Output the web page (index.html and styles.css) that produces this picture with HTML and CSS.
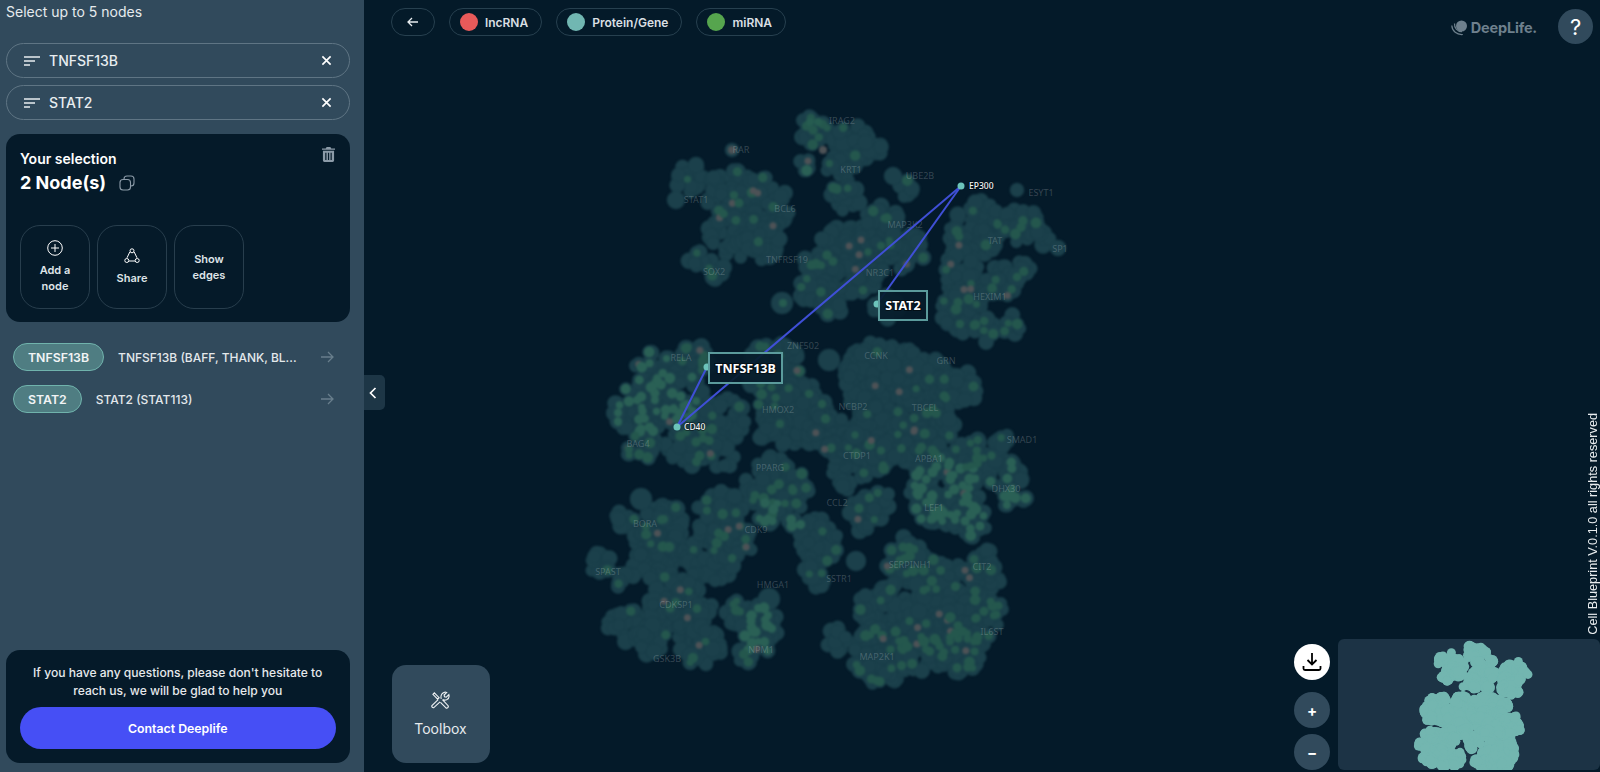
FILE: index.html
```html
<!DOCTYPE html>
<html lang="en">
<head>
  <meta charset="UTF-8" />
  <meta name="viewport" content="width=device-width, initial-scale=1.0" />
  <title>Cell Blueprint</title>
  <link rel="stylesheet" href="styles.css">
</head>
<body>
  <div class="app">
    <aside class="sidebar">
      <p class="hint">Select up to 5 nodes</p>

      <div class="search-pill">
        <svg class="sort-icon" viewBox="0 0 16 10"><path d="M0 1h16M0 5h11M0 9h6"/></svg>
        <span>TNFSF13B</span>
        <svg class="close-icon" viewBox="0 0 12 12"><path d="M1.5 1.5l9 9M10.5 1.5l-9 9"/></svg>
      </div>
      <div class="search-pill">
        <svg class="sort-icon" viewBox="0 0 16 10"><path d="M0 1h16M0 5h11M0 9h6"/></svg>
        <span>STAT2</span>
        <svg class="close-icon" viewBox="0 0 12 12"><path d="M1.5 1.5l9 9M10.5 1.5l-9 9"/></svg>
      </div>

      <section class="selection">
        <svg class="trash-icon" viewBox="0 0 14 16"><path d="M5 0h4l1 1.500h4v1.500H0V1.500h4zM1 4h12v10.500a1.500 1.500 0 0 1-1.500 1.500h-9A1.500 1.500 0 0 1 1 14.500zm2.500 2v8h1.300V6zm2.900 0v8h1.300V6zm2.800 0v8h1.300V6z"/></svg>
        <h3>Your selection</h3>
        <div class="count">
          <span>2 Node(s)</span>
          <svg class="copy-icon" viewBox="0 0 16 16"><rect x="1" y="4.500" width="10.500" height="10.500" rx="3"/><path d="M5 4.500V4a3 3 0 0 1 3-3h4a3 3 0 0 1 3 3v4a3 3 0 0 1-3 3h-.5"/></svg>
        </div>
        <div class="actions">
          <button class="action">
            <svg viewBox="0 0 16 16"><circle cx="8" cy="8" r="7.300"/><path d="M8 4v8M4 8h8"/></svg>
            Add a node
          </button>
          <button class="action">
            <svg viewBox="0 0 16 16"><path d="M5.800 4L3 9.800M10.200 4L13 9.800M5 13h6"/><circle cx="8" cy="2.800" r="2"/><circle cx="2.800" cy="12.500" r="2"/><circle cx="13.200" cy="12.500" r="2"/></svg>
            Share
          </button>
          <button class="action">Show edges</button>
        </div>
      </section>

      <div class="node-row">
        <span class="node-tag">TNFSF13B</span>
        <span class="node-name">TNFSF13B (BAFF, THANK, BL...</span>
        <svg class="go-icon" viewBox="0 0 14 12"><path d="M1 6h12M8 1l5 5-5 5"/></svg>
      </div>
      <div class="node-row">
        <span class="node-tag">STAT2</span>
        <span class="node-name">STAT2 (STAT113)</span>
        <svg class="go-icon" viewBox="0 0 14 12"><path d="M1 6h12M8 1l5 5-5 5"/></svg>
      </div>

      <section class="contact">
        <p>If you have any questions, please don't hesitate to reach us, we will be glad to help you</p>
        <button class="contact-btn">Contact Deeplife</button>
      </section>
    </aside>

    <main class="stage">
      <svg id="graph" class="graph" viewBox="364 0 1236 772"></svg>

      <header class="topbar">
        <div class="legend">
          <button class="chip back-chip">
            <svg viewBox="0 0 12 10"><path d="M11 5H1.500M5 1L1 5l4 4"/></svg>
          </button>
          <span class="chip"><i class="dot dot-red"></i>lncRNA</span>
          <span class="chip"><i class="dot dot-teal"></i>Protein/Gene</span>
          <span class="chip"><i class="dot dot-green"></i>miRNA</span>
        </div>
        <div class="brand">
          <div class="logo">
            <svg viewBox="0 0 18 16"><circle cx="10.500" cy="6" r="5.500"/><path class="logo-arc" d="M.8 5.500c.3 5.500 5 9.500 11 9M3.500 3.500c-.3 4 2.500 8 7.500 8.200"/></svg>
            <span>DeepLife.</span>
          </div>
          <button class="help">?</button>
        </div>
      </header>

      <button class="collapse">
        <svg viewBox="0 0 8 12"><path d="M6.500 1L1.500 6l5 5"/></svg>
      </button>

      <button class="toolbox">
        <svg viewBox="0 0 20 20"><path d="M2 3.500L3.500 2l5 5-1.500 1.500zM9.500 11.500l-6.500 6a1.600 1.600 0 0 1-2-2.200L7.500 9M12 9l6 6.500a1.700 1.700 0 0 1-2.300 2.300L10 12M10.800 8.200C10 5.500 11 2.500 13.500 1.500c1-.4 2-.4 3 0L13.800 4.200l.4 1.900 1.900.4 2.700-2.700c.6 2.200-.3 4.500-2.400 5.400-1.300.5-2.800.4-3.800-.3"/></svg>
        Toolbox
      </button>

      <p class="copyright">Cell Blueprint V.0.1.0 all rights reserved</p>

      <div class="map-area">
        <div class="map-controls">
          <button class="round-btn download">
            <svg viewBox="0 0 20 20"><path d="M10 1v11M5.500 8l4.500 4.500L14.500 8M1.500 14v2.500a1.500 1.500 0 0 0 1.500 1.500h14a1.500 1.500 0 0 0 1.500-1.500V14"/></svg>
          </button>
          <button class="round-btn zoom-in">+</button>
          <button class="round-btn">&minus;</button>
        </div>
        <svg id="minimap" class="minimap" viewBox="1338 639 262 131"></svg>
      </div>
    </main>
  </div>

  <script src="graph.js"></script>
</body>
</html>
```

FILE: styles.css
```css
* {
  box-sizing: border-box;
}

html, body {
  margin: 0;
  height: 100%;
  overflow: hidden;
}

body {
  font-family: Inter, "Noto Sans", sans-serif;
  background-color: #041a29;
  color: #fff;
}

button {
  font-family: inherit;
  color: inherit;
  border: none;
  background: none;
  padding: 0;
}

.app {
  display: flex;
  height: 772px;
}

/* sidebar */
.sidebar {
  width: 364px;
  flex-shrink: 0;
  display: flex;
  flex-direction: column;
  padding: 0 14.500px 9px 6px;
  background-color: #314a5c;
}

.hint {
  margin: 0 0 19px;
  font-size: 14px;
  line-height: 24px;
  color: #e6ebee;
}

.search-pill {
  display: flex;
  align-items: center;
  height: 35px;
  margin-bottom: 7px;
  padding: 0 17px;
  border: 1px solid #5f7584;
  border-radius: 18px;
  font-size: 14px;
  font-weight: 500;
  color: #e8edf0;
}

.search-pill span {
  flex: 1;
  margin-left: 9px;
}

.sort-icon {
  width: 16px;
  height: 10px;
  fill: none;
  stroke: #e8edf0;
  stroke-width: 1.300;
}

.close-icon {
  width: 11px;
  height: 11px;
  fill: none;
  stroke: #fff;
  stroke-width: 1.800;
}

.selection {
  position: relative;
  height: 188px;
  margin-top: 7px;
  margin-bottom: 21px;
  padding: 16px 14px;
  border-radius: 14px;
  background-color: #051a29;
}

.selection h3 {
  margin: 0;
  font-size: 14px;
  line-height: 17px;
  font-weight: 600;
}

.trash-icon {
  position: absolute;
  top: 13px;
  right: 15px;
  width: 13px;
  height: 15px;
  fill: #8c9ba8;
}

.count {
  display: flex;
  align-items: center;
  margin-top: 4px;
  font-size: 18px;
  line-height: 24px;
  font-weight: 700;
}

.copy-icon {
  width: 16px;
  height: 16px;
  margin-left: 13px;
  fill: none;
  stroke: #8c9ba8;
  stroke-width: 1.100;
}

.actions {
  display: flex;
  gap: 7px;
  margin-top: 30px;
}

.action {
  display: flex;
  flex-direction: column;
  align-items: center;
  justify-content: center;
  width: 70px;
  height: 84px;
  padding: 0 14px;
  border: 1px solid #283e4d;
  border-radius: 20px;
  font-size: 11px;
  line-height: 16px;
  font-weight: 600;
  color: #dfe4e8;
}

.action svg {
  width: 16px;
  height: 16px;
  margin-bottom: 6px;
  fill: none;
  stroke: #fff;
  stroke-width: 1;
}

.node-row {
  display: flex;
  align-items: center;
  height: 28px;
  margin: 0 0 14px 7px;
  font-size: 12px;
  font-weight: 500;
  color: #e3e8eb;
}

.node-tag {
  display: flex;
  align-items: center;
  height: 28px;
  padding: 0 14px;
  border: 1px solid #70b3ac;
  border-radius: 14px;
  background-color: #4f7d82;
  font-size: 12.300px;
  font-weight: 600;
  color: #f1f4f5;
}

.node-name {
  flex: 1;
  margin-left: 14px;
}

.go-icon {
  width: 14px;
  height: 12px;
  margin-right: 16px;
  fill: none;
  stroke: #687e8c;
  stroke-width: 1.300;
}

.contact {
  margin-top: auto;
  height: 113px;
  padding: 14px 14px 0;
  border-radius: 14px;
  background-color: #051a29;
  text-align: center;
}

.contact p {
  margin: 0 0 7px;
  font-size: 12.100px;
  line-height: 18px;
  font-weight: 500;
  color: #e6e9ec;
}

.contact-btn {
  width: 100%;
  height: 42px;
  border-radius: 21px;
  background-color: #464ff5;
  font-size: 12.300px;
  font-weight: 600;
}

/* graph area */
.stage {
  position: relative;
  flex: 1;
}

.graph {
  position: absolute;
  inset: 0;
  width: 100%;
  height: 100%;
  font-family: "Noto Sans", sans-serif;
}

.nodes {
  filter: blur(0.8px);
}

.graph-label {
  font-size: 9px;
  fill: #ffffff;
  fill-opacity: 0.2;
  text-anchor: middle;
}

.edge {
  stroke: #3f4fd6;
  stroke-width: 2;
}

.picked {
  fill: #6cc4ba;
}

.picked-label {
  font-size: 8.500px;
  font-weight: 500;
  fill: #f2f5f6;
  stroke: #000;
  stroke-width: 1.500px;
  stroke-opacity: 0.5;
  paint-order: stroke;
}

.tag-box {
  fill: #061c2b;
  fill-opacity: 0.92;
  stroke: #5b9b9c;
  stroke-width: 2;
}

.tag-text {
  font-size: 12.500px;
  font-weight: 700;
  fill: #fff;
  stroke: #000;
  stroke-width: 2px;
  stroke-opacity: 0.5;
  paint-order: stroke;
  text-anchor: middle;
}

.topbar {
  position: relative;
  display: flex;
  justify-content: space-between;
  align-items: flex-start;
  padding: 8px 7px 0 27px;
}

.legend {
  display: flex;
  gap: 14px;
}

.chip {
  display: flex;
  align-items: center;
  height: 28px;
  padding: 0 13px 0 10px;
  border: 1px solid #27404f;
  border-radius: 14px;
  font-size: 12px;
  font-weight: 600;
  color: #d9dfe3;
}

.back-chip {
  justify-content: center;
  width: 44px;
  padding: 0;
}

.back-chip svg {
  width: 12px;
  height: 10px;
  fill: none;
  stroke: #e8edf0;
  stroke-width: 1.300;
}

.dot {
  width: 18px;
  height: 18px;
  margin-right: 7px;
  border-radius: 50%;
}

.dot-red {
  background-color: #e85a5a;
}

.dot-teal {
  background-color: #71b7b2;
}

.dot-green {
  background-color: #56a54e;
}

.brand {
  display: flex;
  align-items: flex-start;
  gap: 21px;
}

.logo {
  display: flex;
  align-items: center;
  gap: 2px;
  margin-top: 11px;
  font-size: 14.500px;
  font-weight: 700;
  line-height: 18px;
  letter-spacing: -0.2px;
  color: #6e808d;
}

.logo svg {
  width: 18px;
  height: 16px;
  fill: #6e808d;
}

.logo-arc {
  fill: none;
  stroke: #6e808d;
  stroke-width: 1.200;
}

.help {
  width: 35px;
  height: 35px;
  margin-top: 1px;
  border-radius: 50%;
  background-color: #314a5c;
  font-size: 22px;
  font-weight: 400;
}

.collapse {
  position: absolute;
  left: 0;
  top: 375px;
  display: flex;
  align-items: center;
  justify-content: center;
  width: 21px;
  height: 35px;
  padding-right: 4px;
  border-radius: 0 5px 5px 0;
  background-color: #1d3646;
}

.collapse svg {
  width: 8px;
  height: 12px;
  fill: none;
  stroke: #fff;
  stroke-width: 1.700;
}

.toolbox {
  position: absolute;
  left: 27.500px;
  bottom: 9px;
  display: flex;
  flex-direction: column;
  align-items: center;
  justify-content: center;
  width: 98px;
  height: 98px;
  border-radius: 14px;
  background-color: #314a5c;
  font-size: 14px;
  color: #e6ebee;
}

.toolbox svg {
  width: 19px;
  height: 19px;
  margin-bottom: 10px;
  fill: none;
  stroke: #eef1f3;
  stroke-width: 1.200;
}

.copyright {
  position: absolute;
  right: 0;
  bottom: 137px;
  margin: 0;
  writing-mode: vertical-rl;
  transform: rotate(180deg);
  font-family: "Liberation Sans", Arial, sans-serif;
  font-size: 12.700px;
  line-height: 14px;
  color: #e9edef;
}

.map-area {
  position: absolute;
  right: 0;
  bottom: 2px;
  display: flex;
  gap: 8px;
}

.map-controls {
  display: flex;
  flex-direction: column;
  padding-top: 5px;
  gap: 6px;
}

.round-btn {
  display: flex;
  align-items: center;
  justify-content: center;
  width: 36px;
  height: 36px;
  border-radius: 50%;
  background-color: #314a5c;
  font-size: 15px;
  font-weight: 700;
}

.download {
  margin-bottom: 6px;
  background-color: #fff;
}

.download svg {
  width: 20px;
  height: 20px;
  fill: none;
  stroke: #000;
  stroke-width: 1.800;
}

.minimap {
  width: 262px;
  height: 131px;
  border-radius: 6px;
  background-color: #1c3345;
}

.mini-node {
  fill: #73b6b0;
}
```

FILE: graph.js
```js
// graph data is in page pixels, same numbers as the svg viewBox
// each lobe: x, y, radius, chance of a green dot
const lobes = [
  // top
  [815, 130, 16, 0.2], [850, 145, 22, 0.05], [872, 150, 10, 0.05], [805, 165, 8, 0.3], [838, 168, 12, 0.1],
  // STAT1
  [690, 180, 16, 0.05], [730, 195, 26, 0.06], [762, 205, 28, 0.06], [735, 230, 28, 0.05], [762, 240, 20, 0.06], [700, 262, 12, 0.2], [718, 272, 8, 0.1],
  // middle
  [850, 260, 36, 0.06], [820, 272, 20, 0.1], [880, 228, 22, 0.06], [905, 250, 20, 0.08], [810, 290, 12, 0.1], [830, 305, 12, 0.1], [885, 308, 14, 0.1], [845, 195, 16, 0.08], [905, 190, 10, 0.08],
  // EP300 side
  [975, 228, 28, 0.06], [1022, 225, 18, 0.1], [1040, 238, 10, 0.12], [960, 272, 22, 0.06], [962, 312, 24, 0.14], [1000, 282, 18, 0.12], [1012, 325, 10, 0.2], [985, 330, 12, 0.16], [1025, 268, 8, 0.2],
  // RELA / CD40
  [655, 370, 20, 0.28], [640, 410, 26, 0.28], [675, 395, 28, 0.24], [690, 440, 26, 0.1], [725, 420, 22, 0.06], [640, 445, 16, 0.2], [722, 455, 14, 0.06], [695, 360, 16, 0.2],
  // HMOX2
  [775, 365, 26, 0.08], [795, 415, 34, 0.03], [770, 395, 16, 0.06], [825, 430, 20, 0.1], [765, 430, 10, 0.1], [750, 375, 12, 0.1],
  // CCNK
  [885, 380, 42, 0.03], [925, 385, 28, 0.04], [960, 385, 20, 0.03], [880, 430, 26, 0.05], [915, 440, 24, 0.1], [935, 425, 20, 0.08], [935, 450, 8, 0.1],
  // CTDP1
  [850, 470, 20, 0.08], [880, 455, 16, 0.05], [840, 445, 14, 0.08],
  // LEF1 / APBA1
  [945, 490, 36, 0.35], [975, 460, 22, 0.2], [1005, 475, 18, 0.3], [1015, 500, 12, 0.3], [970, 520, 18, 0.28], [1000, 440, 10, 0.12], [930, 510, 16, 0.3],
  // PPARG
  [775, 485, 30, 0.2], [770, 510, 14, 0.24], [795, 495, 14, 0.2],
  // CCL2
  [868, 515, 18, 0.05], [820, 540, 22, 0.06], [815, 575, 14, 0.08], [880, 500, 12, 0.05], [795, 525, 7, 0.4],
  // BORA
  [665, 525, 22, 0.06], [625, 520, 10, 0.1], [720, 515, 24, 0.06], [655, 555, 28, 0.06], [710, 555, 28, 0.06], [600, 562, 12, 0.05], [740, 540, 16, 0.12], [625, 580, 10, 0.06],
  // CDKSP1
  [680, 610, 32, 0.05], [625, 625, 18, 0.1], [700, 645, 22, 0.05], [735, 610, 14, 0.1], [650, 640, 16, 0.08], [760, 625, 20, 0.45], [755, 645, 14, 0.4], [745, 655, 8, 0.2],
  // SERPINH1 / MAP2K1
  [910, 560, 24, 0.16], [885, 610, 28, 0.08], [945, 590, 30, 0.1], [880, 655, 30, 0.16], [925, 640, 32, 0.12], [975, 620, 28, 0.2], [985, 580, 16, 0.06], [965, 660, 16, 0.16], [985, 560, 12, 0.05], [838, 640, 12, 0.16], [1000, 610, 8, 0.16], [960, 650, 22, 0.16]
];

const singles = [
  [641, 499, 11], [676, 200, 9], [782, 303, 11], [696, 165, 8], [808, 161, 7],
  [856, 561, 10], [855, 435, 10], [1017, 277, 10], [1058, 248, 8], [893, 176, 9],
  [829, 360, 11], [769, 599, 11], [691, 656, 9], [732, 150, 7], [1017, 190, 7]
];

// dots that stand out in the picture, placed by hand
const dots = [
  [732, 150, 4, "#4d5256"], [783, 303, 4, "#265c50"], [823, 150, 4, "#4d5256"], [861, 240, 3.500, "#4d5256"],
  [818, 122, 4, "#265c50"], [810, 122, 4, "#265c50"]
];

const labels = [
  ["IRAG2", 842, 124], ["RAR", 741, 153], ["KRT1", 851, 173], ["UBE2B", 920, 179], ["STAT1", 696, 203],
  ["BCL6", 785, 212], ["ESYT1", 1041, 196], ["MAP3K2", 905, 228], ["TAT", 995, 244], ["SP1", 1060, 252],
  ["TNFRSF19", 787, 263], ["SOX2", 714, 275], ["NR3C1", 880, 276], ["HEXIM1", 990, 300], ["ZNF502", 803, 349],
  ["CCNK", 876, 359], ["GRN", 946, 364], ["RELA", 681, 361], ["HMOX2", 778, 413], ["NCBP2", 853, 410],
  ["TBCEL", 925, 411], ["BAG4", 638, 447], ["CTDP1", 857, 459], ["APBA1", 929, 462], ["SMAD1", 1022, 443],
  ["PPARG", 770, 471], ["DHX30", 1006, 492], ["LEF1", 934, 511], ["CCL2", 837, 506], ["BORA", 645, 527],
  ["CDK9", 756, 533], ["SPAST", 608, 575], ["SERPINH1", 910, 568], ["CIT2", 982, 570], ["SSTR1", 839, 582],
  ["HMGA1", 773, 588], ["CDKSP1", 676, 608], ["NPM1", 761, 653], ["IL6ST", 992, 635], ["MAP2K1", 877, 660],
  ["GSK3B", 667, 662]
];

const SVG_NS = "http://www.w3.org/2000/svg";

// seeded so the picture is the same every load
let seed = 20240611;
function rand() {
  seed = (seed + 0x6d2b79f5) | 0;
  let t = Math.imul(seed ^ (seed >>> 15), 1 | seed);
  t = (t + Math.imul(t ^ (t >>> 7), 61 | t)) ^ t;
  return ((t ^ (t >>> 14)) >>> 0) / 4294967296;
}

function add(parent, tag, attrs, text) {
  const el = document.createElementNS(SVG_NS, tag);
  for (const key in attrs) {
    el.setAttribute(key, attrs[key]);
  }
  if (text) {
    el.textContent = text;
  }
  parent.appendChild(el);
  return el;
}

const graph = document.getElementById("graph");
const minimap = document.getElementById("minimap");
const nodeGroup = add(graph, "g", { class: "nodes" });

const points = [];
lobes.forEach(([x, y, r, green]) => {
  const count = Math.max(5, Math.round((r * r * 3.14) / 34));
  for (let i = 0; i < count; i++) {
    const angle = rand() * Math.PI * 2;
    const dist = Math.sqrt(rand()) * r;
    points.push([x + Math.cos(angle) * dist, y + Math.sin(angle) * dist, 6 + rand() * 2.5, green]);
  }
});
singles.forEach(([x, y, r]) => {
  points.push([x, y, r, 0.1]);
});

points.forEach(([x, y, r]) => {
  add(nodeGroup, "circle", { cx: x, cy: y, r: r, fill: "#1b404b", stroke: "#183b46", "stroke-width": 0.6 });
});

// green and pink dots sit on top of the base nodes
points.forEach(([x, y, r, green]) => {
  const roll = rand();
  if (roll < green) {
    add(nodeGroup, "circle", { cx: x, cy: y, r: 3.5 + rand() * 2, fill: green > 0.2 ? "#2a6055" : "#24574d" });
  } else if (roll > 0.987) {
    add(nodeGroup, "circle", { cx: x, cy: y, r: 3.5, fill: "#4d5256" });
  }
});

dots.forEach(([x, y, r, fill]) => {
  add(nodeGroup, "circle", { cx: x, cy: y, r: r, fill: fill });
});

labels.forEach(([name, x, y]) => {
  add(graph, "text", { class: "graph-label", x: x, y: y }, name);
});

// edges between the picked nodes
[
  [677, 427, 961, 186],
  [677, 427, 707, 367],
  [877, 304, 961, 186]
].forEach(([x1, y1, x2, y2]) => {
  add(graph, "line", { class: "edge", x1: x1, y1: y1, x2: x2, y2: y2 });
});

[[961, 186], [677, 427], [707, 367], [877, 304]].forEach(([x, y]) => {
  add(graph, "circle", { class: "picked", cx: x, cy: y, r: 3.5 });
});

add(graph, "text", { class: "picked-label", x: 969, y: 189 }, "EP300");
add(graph, "text", { class: "picked-label", x: 684, y: 430 }, "CD40");

[
  ["TNFSF13B", 709, 353, 73, 30],
  ["STAT2", 879, 291, 48, 29]
].forEach(([name, x, y, w, h]) => {
  add(graph, "rect", { class: "tag-box", x: x, y: y, width: w, height: h });
  add(graph, "text", { class: "tag-text", x: x + w / 2, y: y + h / 2 + 4.5 }, name);
});

// minimap is the same node set, shrunk down
points.forEach(([x, y]) => {
  add(minimap, "circle", {
    class: "mini-node",
    cx: 1418 + (x - 590) * 0.235,
    cy: 646 + (y - 120) * 0.222,
    r: 4.5
  });
});
```
